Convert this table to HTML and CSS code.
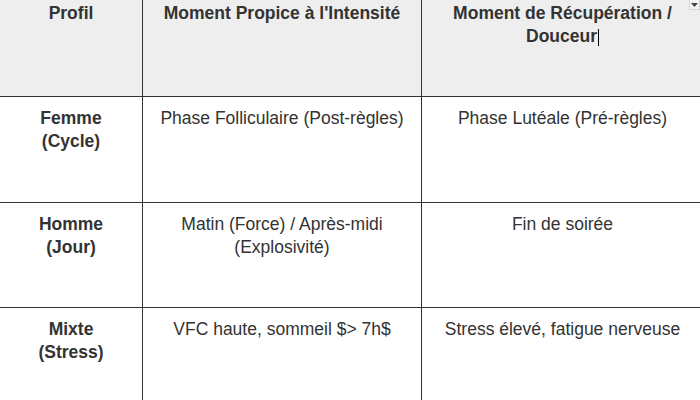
FILE: index.html
```html
<!DOCTYPE html>
<html lang="fr">
<head>
<meta charset="utf-8">
<title>Profils</title>
<link rel="stylesheet" href="styles.css">
</head>
<body>
<table class="grid">
  <colgroup>
    <col class="c1">
    <col class="c2">
    <col class="c3">
  </colgroup>
  <thead>
    <tr>
      <th>Profil</th>
      <th>Moment Propice à l'Intensité</th>
      <th class="last">Moment de Récupération / Douceur<span class="caret"></span>
        <span class="menu"><svg width="7" height="4" viewBox="0 0 7 4"><path d="M0 0H7L3.5 4Z" fill="#444"/></svg></span>
      </th>
    </tr>
  </thead>
  <tbody>
    <tr>
      <th>Femme (Cycle)</th>
      <td>Phase Folliculaire (Post-règles)</td>
      <td class="last">Phase Lutéale (Pré-règles)</td>
    </tr>
    <tr>
      <th>Homme (Jour)</th>
      <td>Matin (Force) / Après-midi (Explosivité)</td>
      <td class="last">Fin de soirée</td>
    </tr>
    <tr>
      <th>Mixte (Stress)</th>
      <td>VFC haute, sommeil $&gt; 7h$</td>
      <td class="last">Stress élevé, fatigue nerveuse</td>
    </tr>
  </tbody>
</table>
</body>
</html>
```

FILE: styles.css
```css
html, body {
  margin: 0;
  padding: 0;
  background: #ffffff;
  overflow: hidden;
}

.grid {
  border-collapse: separate;
  border-spacing: 0;
  table-layout: fixed;
  width: 703px;
  margin-top: -8px;
  font-family: "Liberation Sans", Arial, sans-serif;
  font-size: 17.5px;
  line-height: 23px;
  color: #333333;
}

.c1 { width: 143px; }
.c2 { width: 279px; }
.c3 { width: 281px; }

.grid th,
.grid td {
  box-sizing: border-box;
  height: 105px;
  padding: 10px 15px;
  text-align: center;
  vertical-align: top;
  border-right: 1px solid #333333;
  border-bottom: 1px solid #333333;
}

.grid th {
  font-weight: bold;
}

.grid td {
  font-weight: normal;
}

.grid thead th {
  background: #eeeeee;
}

.grid thead th.last {
  position: relative;
}

.grid .last {
  border-right: none;
}

.grid tbody tr:first-child th,
.grid tbody tr:first-child td {
  height: 106px;
}

.caret {
  display: inline-block;
  width: 1px;
  height: 17px;
  margin-left: 1px;
  background: #000000;
  vertical-align: -4px;
}

.menu {
  position: absolute;
  top: 7px;
  right: 3px;
  width: 11px;
  height: 11px;
  box-sizing: border-box;
  border: 1px solid #d4d4d4;
  background: #f4f4f4;
  display: flex;
  align-items: center;
  justify-content: center;
}

.menu svg {
  display: block;
}
```
